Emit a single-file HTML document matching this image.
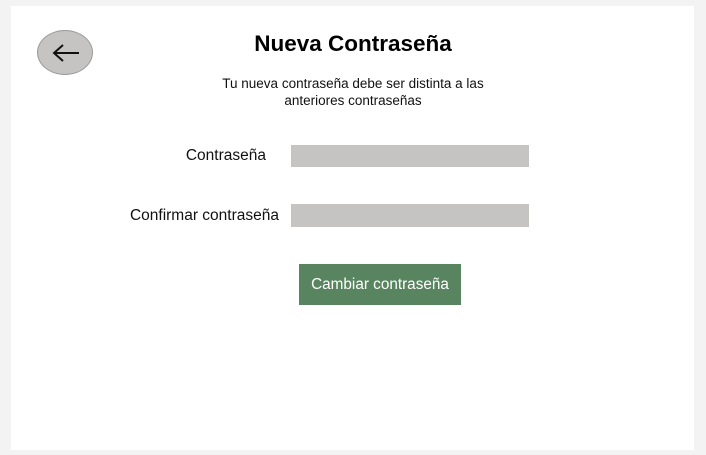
<!DOCTYPE html>
<html><head><style>
body{margin:0;width:706px;height:455px;background:#f3f3f3;font-family:"Liberation Sans",sans-serif;position:relative;overflow:hidden}
.p{position:absolute;left:11px;top:6px;width:683px;height:444px;background:#fff}
.a{position:absolute}
</style></head><body>
<div class="p"></div>
<div class="a" style="left:37px;top:30px;width:56px;height:45px;border-radius:50%;background:#c5c4c2;border:1px solid #9a9a9a;box-sizing:border-box"></div>
<svg class="a" style="left:50px;top:40px" width="30" height="26" viewBox="0 0 30 26"><path d="M4 13H29M13 5L4 13L13 21" stroke="#111" stroke-width="2" fill="none"/></svg>
<div class="a" style="left:0;width:706px;top:31px;text-align:center;font-size:22.5px;font-weight:bold;color:#000">Nueva Contraseña</div>
<div class="a" style="left:0;width:706px;top:75px;text-align:center;font-size:13.5px;line-height:17px;color:#111">Tu nueva contraseña debe ser distinta a las<br>anteriores contraseñas</div>
<div class="a" style="left:60px;width:206px;top:147px;text-align:right;font-size:15.5px;color:#111">Contraseña</div>
<div class="a" style="left:60px;width:219px;top:207px;text-align:right;font-size:15.5px;color:#111">Confirmar contraseña</div>
<div class="a" style="left:291px;top:145px;width:238px;height:22px;background:#c5c4c2"></div>
<div class="a" style="left:291px;top:204px;width:238px;height:23px;background:#c5c4c2"></div>
<div class="a" style="left:299px;top:264px;width:162px;height:41px;background:#58855f;color:#fff;font-size:15.3px;line-height:41px;text-align:center">Cambiar contraseña</div>
</body></html>
